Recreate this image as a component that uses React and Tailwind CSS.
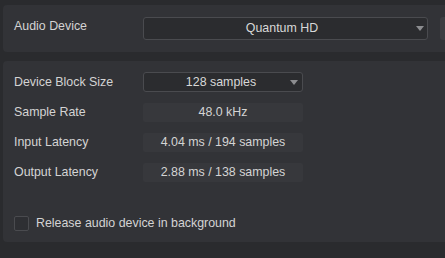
import React from 'react';

const font = { fontFamily: '"Liberation Sans", Arial, sans-serif' };

const Arrow = () => (
  <svg width="8" height="5" viewBox="0 0 8 5" className="shrink-0">
    <path d="M0 0 L8 0 L4 5 Z" fill="#8c8d90" />
  </svg>
);

const Readout = ({ children }) => (
  <div className="flex h-[19px] w-[160px] items-center justify-center rounded-[2px] bg-[#37383c] text-[12.4px] text-[#d4d4d4]">
    {children}
  </div>
);

const Row = ({ label, children }) => (
  <div className="flex items-center">
    <div className="w-[129px] text-[12.4px] text-[#d4d4d4]">{label}</div>
    {children}
  </div>
);

const App = () => {
  return (
    <div className="h-[258px] w-[445px] overflow-hidden bg-[#2a2b2e]" style={font}>
      <div className="ml-[3px] mt-[5px] flex h-[47px] w-[460px] items-center rounded-[4px] bg-[#323337] pl-[11px]">
        <div className="w-[129px] -translate-y-[2px] text-[12.4px] text-[#d4d4d4]">Audio Device</div>
        <div className="flex h-[23px] w-[285px] items-center rounded-[3px] border border-[#4a4b4f] bg-[#2b2c2f] pl-[4px] pr-[3px]">
          <span className="flex-1 text-center text-[12.4px] text-[#d8d8d8]">Quantum HD</span>
          <Arrow />
        </div>
        <div className="ml-[12px] h-[23px] w-[20px] rounded-[3px] bg-[#3d3e42]" />
      </div>

      <div className="ml-[3px] mt-[9px] flex h-[181px] w-[460px] flex-col rounded-[4px] bg-[#323337] pl-[11px] pt-[11px]">
        <div className="flex flex-col gap-[11px]">
          <Row label="Device Block Size">
            <div className="flex h-[20px] w-[160px] items-center rounded-[3px] border border-[#4a4b4f] bg-[#2b2c2f] pl-[8px] pr-[4px]">
              <span className="flex-1 text-center text-[12.4px] text-[#d8d8d8]">128 samples</span>
              <Arrow />
            </div>
          </Row>
          <Row label="Sample Rate">
            <Readout>48.0 kHz</Readout>
          </Row>
          <Row label="Input Latency">
            <Readout>4.04 ms / 194 samples</Readout>
          </Row>
          <Row label="Output Latency">
            <Readout>2.88 ms / 138 samples</Readout>
          </Row>
        </div>
        <div className="mt-[32px] flex items-center gap-[7px]">
          <div className="h-[15px] w-[15px] rounded-[2px] border border-[#4a4b4f] bg-[#2e2f33]" />
          <span className="text-[12.4px] text-[#d4d4d4]">Release audio device in background</span>
        </div>
      </div>
    </div>
  );
};

export default App;
